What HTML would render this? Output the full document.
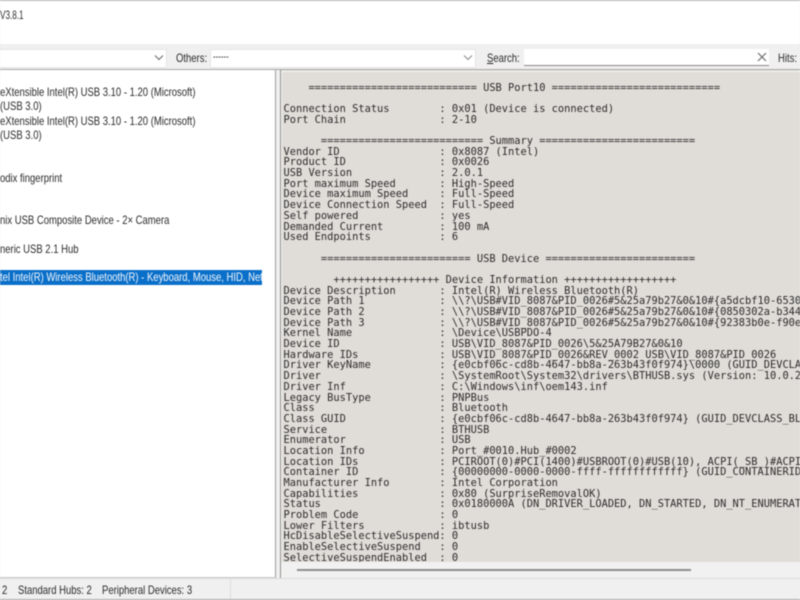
<!DOCTYPE html>
<html>
<head>
<meta charset="utf-8">
<style>
html,body{margin:0;padding:0;width:800px;height:600px;overflow:hidden;background:#f0f0f0;}
#w{position:absolute;left:0;top:0;width:800px;height:600px;overflow:hidden;filter:blur(0.45px);font-family:"Liberation Sans",sans-serif;color:#222;}
.a{position:absolute;}
.t{position:absolute;white-space:pre;font-size:12px;line-height:14px;color:#2a2a2a;transform:scaleX(.79);transform-origin:0 0;}
pre{position:absolute;left:283.5px;top:82.6px;margin:0;font-family:"DejaVu Sans Mono",monospace;font-size:10.36px;line-height:10.68px;color:#2c2c2c;white-space:pre;}
</style>
</head>
<body>
<div id="w">
<div class="a" style="left:0;top:0;width:800px;height:44px;background:#fff;"></div>
<div class="a" style="left:0;top:0;width:800px;height:1px;background:#b4b4b4;"></div>
<div class="t" style="left:0;top:7.5px;transform:scaleX(.68);">V3.8.1</div>

<!-- toolbar combos -->
<div class="a" style="left:0;top:49px;width:166px;height:17px;background:#fff;border:1px solid #e4e4e4;border-left:0;"></div>
<svg class="a" style="left:154px;top:54px;" width="10" height="7"><path d="M1 1.5L5 5.5L9 1.5" fill="none" stroke="#666" stroke-width="1"/></svg>
<div class="t" style="left:176px;top:50.5px;">Others:</div>
<div class="a" style="left:210px;top:49px;width:264px;height:17px;background:#fff;border:1px solid #e4e4e4;"></div>
<div class="t" style="left:213px;top:50.5px;font-size:10px;">------</div>
<svg class="a" style="left:463px;top:54px;" width="10" height="7"><path d="M1 1.5L5 5.5L9 1.5" fill="none" stroke="#888" stroke-width="1"/></svg>
<div class="t" style="left:487px;top:50.5px;"><u>S</u>earch:</div>
<div class="a" style="left:524px;top:49px;width:245px;height:16px;background:#fff;border-bottom:1px solid #8a8a8a;"></div>
<svg class="a" style="left:757px;top:52px;" width="10" height="10"><path d="M1 1L9 9M9 1L1 9" fill="none" stroke="#666" stroke-width="1.1"/></svg>
<div class="t" style="left:778px;top:50.5px;">Hits:</div>

<!-- separator -->
<div class="a" style="left:0;top:69px;width:800px;height:1px;background:#a8a8a8;"></div>

<!-- left pane -->
<div class="a" style="left:0;top:70px;width:275px;height:507px;background:#fff;border-right:1px solid #9c9c9c;border-bottom:1px solid #c8c8c8;"></div>
<div class="t" style="left:0;top:85px;">eXtensible Intel(R) USB 3.10 - 1.20 (Microsoft)</div>
<div class="t" style="left:0;top:99px;">(USB 3.0)</div>
<div class="t" style="left:0;top:113.5px;">eXtensible Intel(R) USB 3.10 - 1.20 (Microsoft)</div>
<div class="t" style="left:0;top:127.5px;">(USB 3.0)</div>
<div class="t" style="left:0;top:171px;">odix fingerprint</div>
<div class="t" style="left:0;top:213px;">nix USB Composite Device - 2× Camera</div>
<div class="t" style="left:0;top:242px;">neric USB 2.1 Hub</div>
<div class="a" style="left:0;top:270px;width:262px;height:15px;background:#0a6fc9;"></div>
<div class="t" style="left:0;top:270px;color:#f4f8fc;">tel Intel(R) Wireless Bluetooth(R) - Keyboard, Mouse, HID, Net</div>

<!-- right pane -->
<div class="a" style="left:280px;top:70px;width:520px;height:492px;background:#e0ddd8;"></div>
<div class="a" style="left:280px;top:70px;width:1px;height:508px;background:#8e8e8e;"></div>
<div class="a" style="left:281px;top:71px;width:519px;height:1px;background:#f4f3f1;"></div>
<div class="a" style="left:281px;top:71px;width:1px;height:507px;background:#f4f3f1;"></div>
<pre>    =========================== USB Port10 ===========================

Connection Status        : 0x01 (Device is connected)
Port Chain               : 2-10

      ========================== Summary =========================
Vendor ID                : 0x8087 (Intel)
Product ID               : 0x0026
USB Version              : 2.0.1
Port maximum Speed       : High-Speed
Device maximum Speed     : Full-Speed
Device Connection Speed  : Full-Speed
Self powered             : yes
Demanded Current         : 100 mA
Used Endpoints           : 6

      ======================== USB Device ========================

        +++++++++++++++++ Device Information ++++++++++++++++++
Device Description       : Intel(R) Wireless Bluetooth(R)
Device Path 1            : \\?\USB#VID_8087&amp;PID_0026#5&amp;25a79b27&amp;0&amp;10#{a5dcbf10-6530
Device Path 2            : \\?\USB#VID_8087&amp;PID_0026#5&amp;25a79b27&amp;0&amp;10#{0850302a-b344
Device Path 3            : \\?\USB#VID_8087&amp;PID_0026#5&amp;25a79b27&amp;0&amp;10#{92383b0e-f90e
Kernel Name              : \Device\USBPDO-4
Device ID                : USB\VID_8087&amp;PID_0026\5&amp;25A79B27&amp;0&amp;10
Hardware IDs             : USB\VID_8087&amp;PID_0026&amp;REV_0002 USB\VID_8087&amp;PID_0026
Driver KeyName           : {e0cbf06c-cd8b-4647-bb8a-263b43f0f974}\0000 (GUID_DEVCLA
Driver                   : \SystemRoot\System32\drivers\BTHUSB.sys (Version: 10.0.2
Driver Inf               : C:\Windows\inf\oem143.inf
Legacy BusType           : PNPBus
Class                    : Bluetooth
Class GUID               : {e0cbf06c-cd8b-4647-bb8a-263b43f0f974} (GUID_DEVCLASS_BL
Service                  : BTHUSB
Enumerator               : USB
Location Info            : Port_#0010.Hub_#0002
Location IDs             : PCIROOT(0)#PCI(1400)#USBROOT(0)#USB(10), ACPI(_SB_)#ACPI
Container ID             : {00000000-0000-0000-ffff-ffffffffffff} (GUID_CONTAINERID
Manufacturer Info        : Intel Corporation
Capabilities             : 0x80 (SurpriseRemovalOK)
Status                   : 0x0180000A (DN_DRIVER_LOADED, DN_STARTED, DN_NT_ENUMERAT
Problem Code             : 0
Lower Filters            : ibtusb
HcDisableSelectiveSuspend: 0
EnableSelectiveSuspend   : 0
SelectiveSuspendEnabled  : 0</pre>
<div class="a" style="left:282px;top:562px;width:518px;height:16px;background:#f1f1f1;"></div>
<div class="a" style="left:297px;top:569px;width:394px;height:2px;background:#8d8d8d;"></div>

<!-- status bar -->
<div class="a" style="left:0;top:578px;width:800px;height:1px;background:#dcdcdc;"></div>
<div class="a" style="left:230px;top:579px;width:1px;height:20px;background:#dedede;"></div>
<div class="a" style="left:0;top:599px;width:800px;height:1px;background:#a8a8a8;"></div>
<div class="t" style="left:2px;top:583px;">2</div>
<div class="t" style="left:18px;top:583px;">Standard Hubs: 2</div>
<div class="t" style="left:102px;top:583px;">Peripheral Devices: 3</div>
</div>
</body>
</html>
